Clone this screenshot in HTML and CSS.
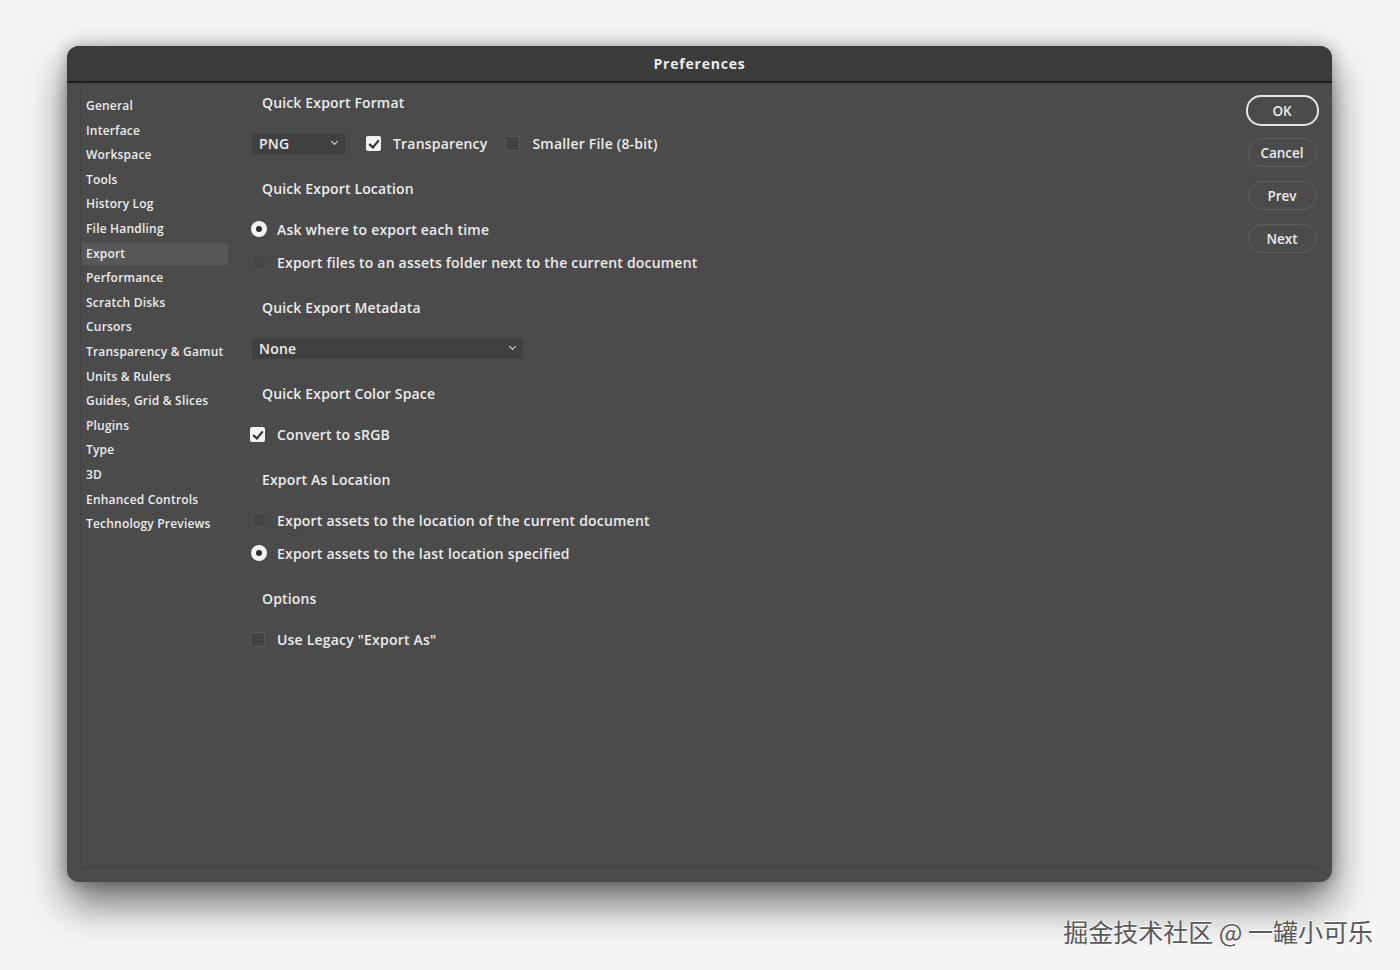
FILE: index.html
```html
<!DOCTYPE html>
<html lang="en">
<head>
    <meta charset="UTF-8">
    <title>Preferences</title>
    <link rel="stylesheet" href="styles.css">
</head>
<body>
    <div class="window">
        <div class="titlebar">Preferences</div>
        <div class="frame">
            <ul class="sidebar">
                <li>General</li>
                <li>Interface</li>
                <li>Workspace</li>
                <li>Tools</li>
                <li>History Log</li>
                <li>File Handling</li>
                <li class="active">Export</li>
                <li>Performance</li>
                <li>Scratch Disks</li>
                <li>Cursors</li>
                <li>Transparency &amp; Gamut</li>
                <li>Units &amp; Rulers</li>
                <li>Guides, Grid &amp; Slices</li>
                <li>Plugins</li>
                <li>Type</li>
                <li>3D</li>
                <li>Enhanced Controls</li>
                <li>Technology Previews</li>
            </ul>

            <div class="main">
                <div class="section">
                    <h2>Quick Export Format</h2>
                    <div class="rows">
                        <div class="row">
                            <div class="select small">PNG <span class="chev"></span></div>
                            <span class="check on"></span>
                            <span class="label">Transparency</span>
                            <span class="check off spaced"></span>
                            <span class="label">Smaller File (8-bit)</span>
                        </div>
                    </div>
                </div>

                <div class="section">
                    <h2>Quick Export Location</h2>
                    <div class="rows">
                        <div class="row"><span class="radio on"></span><span class="label">Ask where to export each time</span></div>
                        <div class="row"><span class="radio off"></span><span class="label">Export files to an assets folder next to the current document</span></div>
                    </div>
                </div>

                <div class="section">
                    <h2>Quick Export Metadata</h2>
                    <div class="rows">
                        <div class="row">
                            <div class="select wide">None <span class="chev"></span></div>
                        </div>
                    </div>
                </div>

                <div class="section">
                    <h2>Quick Export Color Space</h2>
                    <div class="rows">
                        <div class="row"><span class="check on"></span><span class="label">Convert to sRGB</span></div>
                    </div>
                </div>

                <div class="section">
                    <h2>Export As Location</h2>
                    <div class="rows">
                        <div class="row"><span class="radio off"></span><span class="label">Export assets to the location of the current document</span></div>
                        <div class="row"><span class="radio on"></span><span class="label">Export assets to the last location specified</span></div>
                    </div>
                </div>

                <div class="section">
                    <h2>Options</h2>
                    <div class="rows">
                        <div class="row"><span class="check off"></span><span class="label">Use Legacy "Export As"</span></div>
                    </div>
                </div>
            </div>

            <div class="buttons">
                <button class="btn primary">OK</button>
                <button class="btn">Cancel</button>
                <button class="btn">Prev</button>
                <button class="btn">Next</button>
            </div>
        </div>
    </div>

    <div class="watermark">掘金技术社区 @ 一罐小可乐</div>
</body>
</html>
```

FILE: styles.css
```css
* {
    margin: 0;
    padding: 0;
    box-sizing: border-box;
}
body {
    background-color: #f5f5f5;
    font-family: "Open Sans", "Liberation Sans", sans-serif;
    color: #ececec;
    height: 970px;
    overflow: hidden;
    position: relative;
}
.window {
    margin: 46px 0 0 67px;
    width: 1265px;
    height: 836px;
    background-color: #4b4b4b;
    border-radius: 12px;
    overflow: hidden;
    box-shadow: 0 22px 40px rgba(0,0,0,0.55), 0 0 16px rgba(0,0,0,0.3);
}
.titlebar {
    height: 37px;
    background-color: #3b3b3b;
    border-bottom: 2px solid #1d1d1d;
    text-align: center;
    line-height: 35px;
    font-size: 14px;
    font-weight: 700;
    letter-spacing: 0.8px;
}
.frame {
    display: flex;
    height: 785px;
    margin: 0 13px 0 13px;
    border-bottom: 1px solid #404040;
    border-left: 1px solid #444444;
}
.sidebar {
    list-style: none;
    width: 146px;
    padding-top: 11px;
    margin-left: 1px;
}
.sidebar li {
    height: 24.6px;
    line-height: 24.6px;
    font-size: 12px;
    font-weight: 600;
    letter-spacing: 0.2px;
    padding-left: 4px;
    white-space: nowrap;
}
.sidebar li.active {
    background-color: #585858;
    height: 22px;
    line-height: 22px;
    margin: 1.3px 0;
}
.main {
    flex: 1;
    padding: 10px 0 0 22px;
}
.section {
    margin-bottom: 25px;
}
.section h2 {
    font-size: 14px;
    font-weight: 600;
    letter-spacing: 0.15px;
    height: 20px;
    line-height: 20px;
    margin-left: 12px;
}
.rows {
    margin-top: 19px;
    display: flex;
    flex-direction: column;
    gap: 11px;
}
.row {
    display: flex;
    align-items: center;
    height: 22px;
    font-size: 14px;
    font-weight: 600;
    letter-spacing: 0.2px;
}
.label {
    margin-left: 12px;
    white-space: nowrap;
}
.select {
    height: 21px;
    background-color: #404040;
    display: flex;
    align-items: center;
    justify-content: space-between;
    padding: 0 8px 0 7px;
    font-size: 14px;
    font-weight: 600;
    margin-left: 2px;
}
.select.small {
    width: 93px;
    margin-right: 21px;
}
.select.wide {
    width: 271px;
}
.chev {
    width: 5px;
    height: 5px;
    border-right: 1.5px solid #e0e0e0;
    border-bottom: 1.5px solid #e0e0e0;
    transform: rotate(45deg);
    margin-top: -3px;
}
.check {
    width: 15px;
    height: 15px;
    border-radius: 2px;
    position: relative;
    flex-shrink: 0;
}
.check.on {
    background-color: #f2f2f2;
}
.check.on::after {
    content: "";
    position: absolute;
    left: 5px;
    top: 2px;
    width: 4px;
    height: 8px;
    border-right: 2.5px solid #2b2b2b;
    border-bottom: 2.5px solid #2b2b2b;
    transform: rotate(40deg);
}
.check.off {
    background-color: #434343;
    border: 1px solid #585858;
}
.check.spaced {
    margin-left: 18px;
}
.radio {
    width: 16px;
    height: 16px;
    border-radius: 50%;
    flex-shrink: 0;
    margin-left: 1px;
}
.radio.on {
    border: 5px solid #f4f4f4;
    background-color: #2e2e2e;
}
.radio.off {
    background-color: #464646;
    border: 1px solid #575757;
}
.row .radio + .label {
    margin-left: 10px;
}
.buttons {
    width: 74px;
    padding-top: 12px;
    display: flex;
    flex-direction: column;
    align-items: center;
    gap: 14px;
}
.btn {
    width: 69px;
    height: 29px;
    border-radius: 15px;
    border: 1px solid #5e5e5e;
    background-color: transparent;
    color: #ececec;
    font-family: "Open Sans", "Liberation Sans", sans-serif;
    font-size: 13.5px;
    font-weight: 600;
}
.btn.primary {
    width: 73px;
    height: 31px;
    border: 2px solid #e4e4e4;
    margin-bottom: -2px;
}
.watermark {
    position: absolute;
    right: 27px;
    top: 913px;
    font-family: "Noto Sans CJK SC", sans-serif;
    font-size: 25px;
    color: #585858;
    text-shadow: 0 1px 1px #ffffff, 0 -1px 1px #ffffff;
}
```
